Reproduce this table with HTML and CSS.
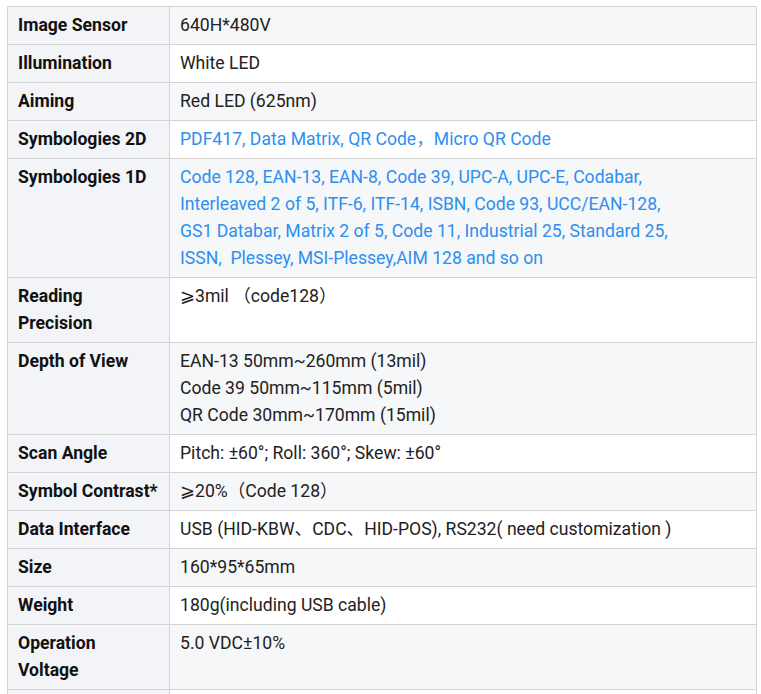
FILE: index.html
```html
<!DOCTYPE html>
<html>
<head>
<meta charset="utf-8">
<link rel="stylesheet" href="styles.css">
</head>
<body>
<div class="wrap">
<table class="spec">
<tbody>
<tr><th>Image Sensor</th><td>640H*480V</td></tr>
<tr><th>Illumination</th><td>White LED</td></tr>
<tr><th>Aiming</th><td>Red LED (625nm)</td></tr>
<tr><th>Symbologies 2D</th><td class="blue">PDF417, Data Matrix, QR Code，Micro QR Code</td></tr>
<tr><th>Symbologies 1D</th><td class="blue">Code 128, EAN-13, EAN-8, Code 39, UPC-A, UPC-E, Codabar,<br>Interleaved 2 of 5, ITF-6, ITF-14, ISBN, Code 93, UCC/EAN-128,<br>GS1 Databar, Matrix 2 of 5, Code 11, Industrial 25, Standard 25,<br>ISSN,&nbsp; Plessey, MSI-Plessey,AIM 128 and so on</td></tr>
<tr><th>Reading<br>Precision</th><td>⩾3mil （code128）</td></tr>
<tr><th>Depth of View</th><td>EAN-13 50mm~260mm (13mil)<br>Code 39 50mm~115mm (5mil)<br>QR Code 30mm~170mm (15mil)</td></tr>
<tr><th>Scan Angle</th><td class="tight">Pitch: ±60°; Roll: 360°; Skew: ±60°</td></tr>
<tr><th>Symbol Contrast*</th><td>⩾20%（Code 128）</td></tr>
<tr><th>Data Interface</th><td>USB (HID-KBW、CDC、HID-POS), RS232( need customization )</td></tr>
<tr><th>Size</th><td>160*95*65mm</td></tr>
<tr><th>Weight</th><td>180g(including USB cable)</td></tr>
<tr><th>Operation<br>Voltage</th><td>5.0 VDC±10%</td></tr>
<tr><th>&nbsp;</th><td>&nbsp;</td></tr>
</tbody>
</table>
</div>
</body>
</html>
```
FILE: styles.css
```css
html, body {
  margin: 0;
  padding: 0;
  background: #ffffff;
}
.wrap {
  padding: 6px 0 0 7px;
}
.spec {
  border-collapse: collapse;
  width: 750px;
  font-family: Roboto, "Noto Sans CJK SC", sans-serif;
  font-size: 17.6px;
  line-height: 27px;
  color: #222222;
}
.spec th, .spec td {
  border: 1px solid #d4d4d4;
  padding: 5px 10px;
  text-align: left;
  vertical-align: top;
}
.spec th {
  width: 141px;
  background: #f3f4f7;
  font-weight: 700;
  color: #111111;
}
.spec tr:nth-child(odd) td {
  background: #f6f7f9;
}
.spec tr:nth-child(even) td {
  background: #ffffff;
}
.spec td.blue {
  color: #2d8ff0;
}
.spec td.tight {
  letter-spacing: 0;
}
```
